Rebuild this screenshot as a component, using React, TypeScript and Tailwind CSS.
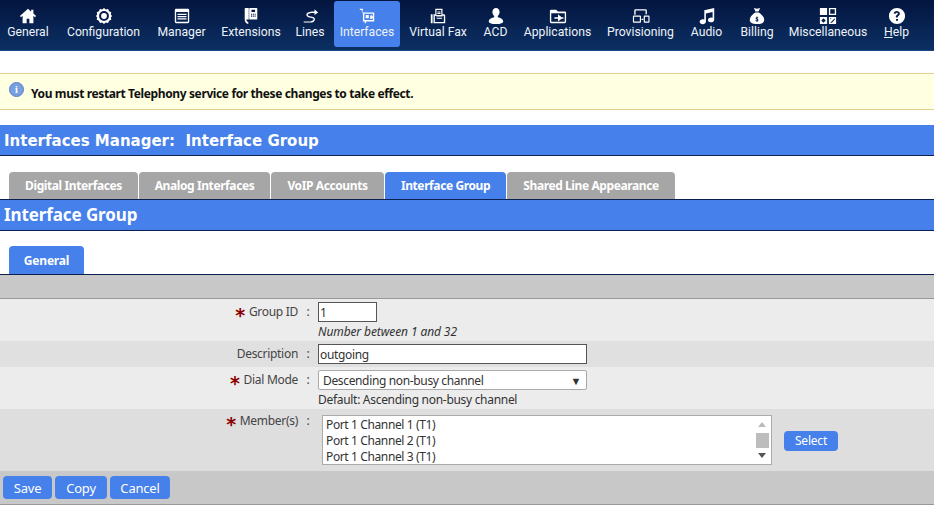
import React from "react";

const I = ({ children }: { children: React.ReactNode }) => (
  <svg viewBox="0 0 20 20" className="w-[18px] h-[18px] text-white" fill="currentColor">{children}</svg>
);

const icons: Record<string, React.ReactNode> = {
  General: <I><path d="M10 2 1 10l1.200 1.300L4 9.800V18h4.500v-5h3v5H16V9.800l1.800 1.500L19 10l-3-2.700V3h-2.500v2.200z" /></I>,
  Configuration: <I><path fillRule="evenodd" d="M10 1l2 1.800 2.600-.5 1 2.400 2.400 1.100-.3 2.700L19 10l-1.300 1.500.3 2.700-2.400 1.100-1 2.400-2.600-.5L10 19l-2-1.800-2.600.5-1-2.400L2 14.200l.3-2.700L1 10l1.300-1.500L2 5.800l2.400-1.100 1-2.400 2.600.5zM10 4.500a5.500 5.500 0 1 0 0 11 5.500 5.500 0 0 0 0-11zm0 2.300a3.200 3.200 0 1 1 0 6.400 3.200 3.200 0 0 1 0-6.400z" /></I>,
  Manager: <I><path fillRule="evenodd" d="M3.500 2h13A1.500 1.500 0 0 1 18 3.500v13a1.500 1.500 0 0 1-1.500 1.500h-13A1.500 1.500 0 0 1 2 16.500v-13A1.500 1.500 0 0 1 3.500 2zM3.500 5.500v11h13v-11zM5 7.500h10V9H5zm0 2.500h10v1.500H5zm0 2.500h10V14H5z" /></I>,
  Extensions: <I><path fillRule="evenodd" d="M4 1h3.500v13H4.800c.2 1.500 1 2.500 2.200 3v2C4.500 18.500 3 16 3 13.500V2a1 1 0 0 1 1-1zm5 0h7a1 1 0 0 1 1 1v11a1 1 0 0 1-1 1H9a1 1 0 0 1-1-1V2a1 1 0 0 1 1-1zm1.500 2v2.500h4V3zM10 7.500v1.200h1.200V7.500zm2 0v1.200h1.200V7.500zm2 0v1.200h1.200V7.500zm-4 2v1.200h1.200V9.500zm2 0v1.200h1.200V9.500zm2 0v1.200h1.200V9.500z" /></I>,
  Lines: <I><path d="M19 6l-4-3.500V5h-1.500C10 5 6 6 6 8.500 6 11 9 11.500 11 12c1.500.3 3 .7 3 1.500 0 1-1.500 2-3.500 2.500H3v1.300h7.500c3 0 5-1.800 5-3.800 0-2-2.500-2.500-4.500-3-1.500-.3-3.500-.7-3.500-2 0-1.200 3-1.800 6-1.800H15V9z" /></I>,
  Interfaces: <I><path fillRule="evenodd" d="M2 2h3.500v1.300H4.800L5.500 6H18v10H9v2H7.500v-2H5.500V7.500L3.800 3.300H2zM7 7.500v7h9.500v-7zm1.500 1.500h3.500v3.500H8.500zm5 .5a2 2 0 1 1 0 3.500z" /></I>,
  "Virtual Fax": <I><path fillRule="evenodd" d="M7 2h8v6h1.500A1.500 1.500 0 0 1 18 9.500V18H5V8h2zm1.300 1.300V9h5.400V3.300zM9.300 5h3.500v1h-3.500zm0 1.800h3.500v1h-3.500zM6.500 9.800v6.800h10V9.800H15v.8H8v-.8zM8.500 12h6v1h-6zM2 8h2v10H2z" /></I>,
  ACD: <I><path d="M10 1c2.500 0 4 2 4 4.500 0 2-1 3.500-2 4.500v1.500c2.500.5 6 2 6 4.500 0 1.500-3 3-8 3s-8-1.500-8-3c0-2.500 3.500-4 6-4.500V10C7 9 6 7.500 6 5.500 6 3 7.500 1 10 1z" /></I>,
  Applications: <I><path fillRule="evenodd" d="M2 3h6l2 2h7.500A1.500 1.500 0 0 1 19 6.500v10a1.500 1.500 0 0 1-1.500 1.500h-15A1.500 1.500 0 0 1 1 16.500v-12A1.500 1.500 0 0 1 2 3zm.5 4v9.500h15V7zM10 8l4 3.500H16v1.500h-2l-4 3v-3H6v-1.500h4z" /></I>,
  Provisioning: <I><path fillRule="evenodd" d="M4 2.500h11A1.500 1.500 0 0 1 16.500 4v4H15V4H4v4.500H2.500V4A1.500 1.500 0 0 1 4 2.500zM2 9.500h7a1 1 0 0 1 1 1v6a1 1 0 0 1-1 1H2a1 1 0 0 1-1-1v-6a1 1 0 0 1 1-1zm.3 1.300v5.400h6.400v-5.400zM14 9.500h4.500a1 1 0 0 1 1 1v6a1 1 0 0 1-1 1H14a1 1 0 0 1-1-1v-6a1 1 0 0 1 1-1zm.3 1.300v5.400h3.900v-5.400zM10.500 13h2v1.500h-2z" /></I>,
  Audio: <I><path d="M18 1 7 3.500V14a3.500 2.700 0 1 0 1.800 2.300V7.300L16.200 5.600V12a3.500 2.700 0 1 0 1.800 2.300z" /></I>,
  Billing: <I><path fillRule="evenodd" d="M6.500 1 10 2l3.500-1-1.800 4h-3.400zM8 6h4c3 2 6 5 6 8.500 0 3-3 4.500-8 4.500s-8-1.500-8-4.500C2 11 5 8 8 6zm1.500 4.500v1c-1.300.3-1.500 2 0 2.500.9.300 1 .8.200.8-.5 0-.9-.2-1.200-.4l-.3.800c.4.300.8.400 1.300.5v1h1v-1c1.400-.4 1.500-2 0-2.600-.9-.4-1-.7-.3-.7.5 0 .8.100 1 .3l.3-.8c-.3-.2-.6-.3-1-.4v-1z" /></I>,
  Miscellaneous: <I><path fillRule="evenodd" d="M1 1h8v8H1zM11 1h8v8h-8zm1.500 1.500v5h5v-5zM1 11h8v8H1zm4 1.500L2.500 15 5 17.500 7.500 15zM11 11h8v8h-8zm6.500 1.500-5 5h1.800l3.200-3.200zM12.500 12.500V14l1.500-1.500z" /></I>,
  Help: <I><path fillRule="evenodd" d="M10 1a9 9 0 1 1 0 18 9 9 0 0 1 0-18zm-.1 3.500C7.800 4.500 6.500 5.600 6.300 7.300l2.200.3c.1-.8.6-1.200 1.300-1.200.7 0 1.200.4 1.200 1 0 .5-.3.800-1 1.300-1 .7-1.300 1.300-1.300 2.500v.5h2.100v-.3c0-.7.200-1 .9-1.500 1-.7 1.500-1.400 1.500-2.600 0-1.500-1.200-2.600-2.800-2.600zM8.900 13.200v2.200h2.200v-2.200z" /></I>,
};

const nav = [
  { t: "General", w: "w-[54px] mr-[5px]" },
  { t: "Configuration", w: "w-[87px] mr-[4px]" },
  { t: "Manager", w: "w-[61px] mr-[4px]" },
  { t: "Extensions", w: "w-[70px] mr-[4px]" },
  { t: "Lines", w: "w-[40px] mr-[4px]" },
  { t: "Interfaces", w: "w-[66px] mr-[3px]" },
  { t: "Virtual Fax", w: "w-[70px] mr-[4px]" },
  { t: "ACD", w: "w-[37px] mr-[4px]" },
  { t: "Applications", w: "w-[79px] mr-[4px]" },
  { t: "Provisioning", w: "w-[79px] mr-[4px]" },
  { t: "Audio", w: "w-[45px] mr-[5px]" },
  { t: "Billing", w: "w-[46px] mr-[4px]" },
  { t: "Miscellaneous", w: "w-[88px] mr-[5px]" },
  { t: "Help", w: "w-[39px]" },
];

const tabs = [
  { t: "Digital Interfaces", w: "w-[129px]" },
  { t: "Analog Interfaces", w: "w-[131px]" },
  { t: "VoIP Accounts", w: "w-[113px]" },
  { t: "Interface Group", w: "w-[121px]", on: true },
  { t: "Shared Line Appearance", w: "w-[168px]" },
];

const Star = () => (
  <span className="text-[#8b0000] text-[19px] leading-[14px] font-bold mr-[4px] translate-y-[3px] font-['DejaVu_Sans',sans-serif]">*</span>
);

const Row = ({ bg, h, label, req, children }: { bg: string; h: string; label: string; req?: boolean; children: React.ReactNode }) => (
  <div className={`flex ${bg} ${h}`}>
    <div className="w-[318px] shrink-0 flex justify-end pt-[3px] text-[#444] h-[22px] tracking-[-0.3px]">
      <span className="flex items-center whitespace-nowrap">
        {req && <Star />}
        {label}
        <span className="w-[20px] text-center">:</span>
      </span>
    </div>
    <div className="flex-1 min-w-0">{children}</div>
  </div>
);

const Btn = ({ children, w }: { children: React.ReactNode; w: string }) => (
  <button className={`${w} h-[23px] pt-[2px] rounded-[4px] bg-[#4680ea] text-white text-[13px] leading-none tracking-[-0.2px]`}>{children}</button>
);

export default function App() {
  return (
    <div className="w-[934px] h-[505px] overflow-hidden bg-white font-['Noto_Sans',sans-serif] text-[12px]">
      <nav className="h-[51px] flex pl-px bg-gradient-to-b from-[#04153f] to-[#0c3064] border-b border-[#174a85] text-[#eef2f8] pt-px">
        {nav.map((n) => (
          <div
            key={n.t}
            className={`${n.w} shrink-0 h-[46px] flex flex-col items-center pt-[6px] rounded-[3px] ${n.t === "Interfaces" ? "bg-[#4680ea]" : ""}`}
          >
            {icons[n.t]}
            <span className="font-['Roboto',sans-serif] text-[12.2px] leading-[15px] whitespace-nowrap">
              {n.t === "Help" ? <><span className="underline">H</span>elp</> : n.t}
            </span>
          </div>
        ))}
      </nav>

      <div className="mt-[22px] h-[37px] bg-[#ffffe1] border-y border-[#e8cf8a] flex items-center pl-[9px]">
        <span className="w-[15px] h-[15px] -mt-[5px] rounded-full bg-[#7a9fe0] border border-[#5a80c8] text-white text-[10px] leading-[13px] text-center font-bold font-['Liberation_Serif',serif]">i</span>
        <span className="ml-[7px] mt-[4px] font-bold text-[#111] text-[12px] tracking-[-0.38px]">You must restart Telephony service for these changes to take effect.</span>
      </div>

      <div className="mt-[15px] h-[31px] bg-[#4680ea] border-b border-[#0a2050] text-white font-['DejaVu_Sans',sans-serif] font-bold text-[15px] leading-[32px] pl-[4px] whitespace-pre">
        Interfaces Manager:  Interface Group
      </div>

      <div className="mt-[16px] h-[27px] flex pl-[9px] gap-px font-bold text-[12px] text-white">
        {tabs.map((t) => (
          <div key={t.t} className={`${t.w} rounded-t-[4px] flex items-center justify-center whitespace-nowrap tracking-[-0.4px] ${t.on ? "bg-[#4680ea]" : "bg-[#a6a6a6]"}`}>
            {t.t}
          </div>
        ))}
      </div>

      <div className="h-[32px] bg-[#4680ea] border-y border-[#0a2050] text-white font-bold text-[17px] leading-[30px] tracking-[-0.1px] pl-[4px]">Interface Group</div>

      <div className="mt-[15px] h-[28px] pl-[9px]">
        <div className="w-[75px] h-[28px] pt-[2px] rounded-t-[4px] bg-[#4680ea] text-white font-bold text-[12px] flex items-center justify-center tracking-[-0.2px]">General</div>
      </div>

      <div className="h-[25px] bg-[#c8c8c8] border-y border-t-[#0a2050] border-b-[#999]" />

      <Row bg="bg-[#ececec]" h="h-[42px]" label="Group ID" req>
        <div className="pt-[3px]">
          <div className="w-[59px] h-[20px] bg-white border border-[#555] text-[#333] px-px leading-[19px]">1</div>
          <div className="italic text-[#333] leading-[18px] mt-px tracking-[-0.1px]">Number between 1 and 32</div>
        </div>
      </Row>
      <Row bg="bg-[#e0e0e0]" h="h-[26px]" label="Description">
        <div className="pt-[3px]">
          <div className="w-[269px] h-[20px] bg-white border border-[#555] text-[#333] px-px leading-[19px] tracking-[-0.35px]">outgoing</div>
        </div>
      </Row>
      <Row bg="bg-[#ececec]" h="h-[42px]" label="Dial Mode" req>
        <div className="pt-[3px]">
          <div className="w-[269px] h-[20px] pt-px bg-white border border-[#aaa] rounded-[2px] text-[#333] pl-[4px] pr-[5px] flex items-center justify-between tracking-[-0.35px]">
            <span>Descending non-busy channel</span>
            <span className="text-[11px] leading-none text-[#333] -mt-px">▼</span>
          </div>
          <div className="text-[#333] leading-[18px] mt-px tracking-[-0.3px]">Default: Ascending non-busy channel</div>
        </div>
      </Row>
      <div className="flex bg-[#dedede] h-[62px]">
        <div className="w-[318px] shrink-0 flex justify-end pt-[2px] text-[#444] h-[22px] tracking-[-0.3px]">
          <span className="flex items-center whitespace-nowrap">
            <Star />Member(s)<span className="w-[20px] text-center">:</span>
          </span>
        </div>
        <div className="pt-[6px] pl-[4px] flex items-center h-[56px]">
          <div className="w-[450px] h-[50px] bg-white border border-[#aaa] text-[#333] flex overflow-hidden tracking-[-0.38px]">
            <div className="flex-1 pl-[3px] leading-[16px] pt-px">
              <div>Port 1 Channel 1 (T1)</div>
              <div>Port 1 Channel 2 (T1)</div>
              <div>Port 1 Channel 3 (T1)</div>
            </div>
            <div className="w-[16px] mr-px flex flex-col items-center justify-between py-[6px] bg-white">
              <span className="w-0 h-0 border-x-[4px] border-x-transparent border-b-[5px] border-b-[#bbb]" />
              <span className="w-[13px] h-[15px] bg-[#bdbdbd]" />
              <span className="w-0 h-0 border-x-[4px] border-x-transparent border-t-[5px] border-t-[#555]" />
            </div>
          </div>
          <button className="ml-[12px] mt-px w-[54px] h-[20px] rounded-[4px] bg-[#4680ea] text-white text-[12px] leading-none tracking-[-0.2px]">Select</button>
        </div>
      </div>

      <div className="h-[34px] bg-[#c8c8c8] border-b border-[#999] flex items-start pt-[5px] pl-[3px] gap-[3px]">
        <Btn w="w-[49px]">Save</Btn>
        <Btn w="w-[52px]">Copy</Btn>
        <Btn w="w-[60px]">Cancel</Btn>
      </div>
    </div>
  );
}
